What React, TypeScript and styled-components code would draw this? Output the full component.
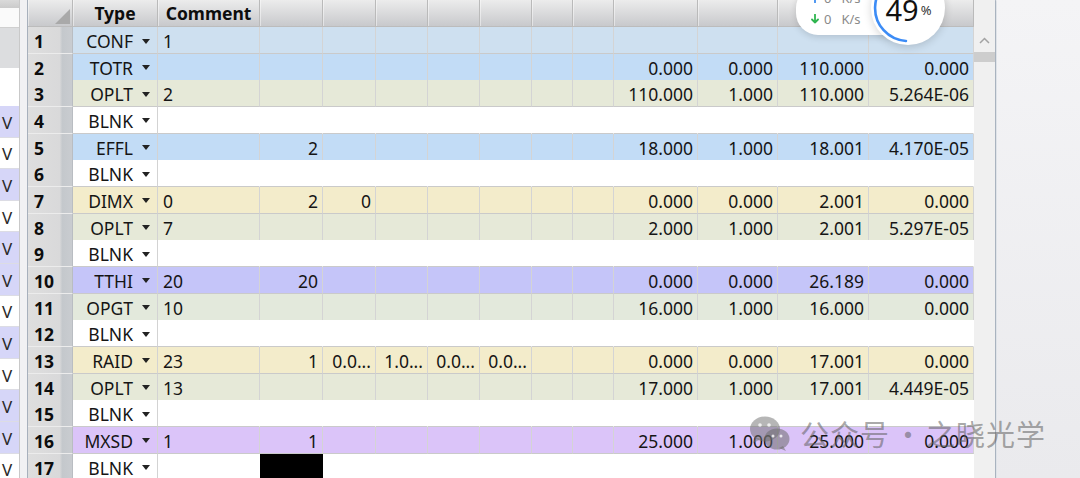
import React from 'react';
import styled, { createGlobalStyle } from 'styled-components';

const GlobalStyle = createGlobalStyle`
  html, body { margin: 0; padding: 0; width: 1080px; height: 478px; overflow: hidden; background: #efeff1; }
  #root { width: 1080px; height: 478px; }
  *, *::before, *::after { box-sizing: border-box; }
`;

const COLS = '45px 85px 102px 63px 53px 52px 52px 52px 41px 41px 84px 80px 91px 105px';
const ROW_H = '26.667px';

const Screen = styled.div`
  position: relative;
  display: flex;
  width: 1080px;
  height: 478px;
  overflow: hidden;
  font-family: "Noto Sans", "Open Sans", sans-serif;
  color: #151515;
`;

/* ---------- left strip (neighbouring window) ---------- */
const LeftStrip = styled.div`
  width: 20px;
  flex: none;
  display: flex;
  flex-direction: column;
  background: #fff;
  border-right: 1px solid #c9c9c9;
  overflow: hidden;
`;
const StripHead = styled.div`
  height: 8px;
  flex: none;
  background: linear-gradient(#dadada, #cbcbcb);
`;
const StripLight = styled.div`
  height: 20px;
  flex: none;
  background: #fafafa;
  border-bottom: 1px solid #cfcfcf;
`;
const StripGray = styled.div`
  height: 40px;
  flex: none;
  background: #dcdddf;
`;
const StripBlank = styled.div`
  height: 38px;
  flex: none;
  background: #fff;
`;
const StripRow = styled.div<{ $lav: boolean }>`
  height: 31.6px;
  flex: none;
  display: flex;
  align-items: center;
  padding: 2px 0 0 2px;
  font-size: 17px;
  color: #2a2a2a;
  background: ${p => (p.$lav ? '#d6d6f8' : '#ffffff')};
  border-bottom: 1px solid #dcdce4;
`;

const Separator = styled.div`
  width: 8px;
  flex: none;
  background: #f1f1f3;
  border-right: 1px solid #a7b0bc;
`;

/* ---------- main panel ---------- */
const Panel = styled.div`
  display: flex;
  flex: none;
  height: 478px;
`;

const Table = styled.div`
  width: 946px;
  display: flex;
  flex-direction: column;
  overflow: hidden;
`;

const HeaderRow = styled.div`
  display: grid;
  grid-template-columns: ${COLS};
  height: 27px;
  flex: none;
  background: linear-gradient(#ececec, #c8c9cc);
  border-bottom: 1px solid #bcbcbc;
`;

const HeadCell = styled.div`
  display: flex;
  align-items: center;
  justify-content: center;
  font-weight: 700;
  font-size: 17.5px;
  color: #0d0d0d;
  border-right: 1px solid #bababa;
  box-shadow: inset 1px 0 0 rgba(255, 255, 255, 0.45);
  white-space: nowrap;
`;

const Corner = styled(HeadCell)`
  justify-content: flex-end;
  align-items: flex-end;
  padding: 0 2px 2px 0;
`;

const DataRow = styled.div<{ $bg: string }>`
  display: grid;
  grid-template-columns: ${COLS};
  height: ${ROW_H};
  flex: none;
  background: ${p => p.$bg};
  font-size: 17.5px;
`;

const RowHead = styled.div`
  display: flex;
  align-items: center;
  padding: 2px 0 0 6px;
  font-weight: 700;
  color: #0d0d0d;
  background: linear-gradient(to right, #dedede 0%, #d9d9da 72%, #c4c8cc 78%, #c9ccd0 100%);
  border-bottom: 1px solid #ececec;
  border-right: 1px solid #b9bdc2;
`;

const TypeCell = styled.div<{ $bg: string }>`
  display: flex;
  align-items: center;
  justify-content: flex-end;
  gap: 9px;
  padding: 2px 7px 0 0;
  background: ${p => p.$bg};
  border-right: 1px solid #d3d3d3;
  border-bottom: 1px solid #cacaca;
  white-space: nowrap;
`;

const Caret = styled.span`
  width: 0;
  height: 0;
  border-left: 4px solid transparent;
  border-right: 4px solid transparent;
  border-top: 5px solid #222;
`;

const Cell = styled.div<{ $left?: boolean; $blank?: boolean; $fill?: string }>`
  display: flex;
  align-items: center;
  justify-content: ${p => (p.$left ? 'flex-start' : 'flex-end')};
  padding: ${p => (p.$left ? '2px 0 0 5px' : '2px 4px 0 0')};
  overflow: hidden;
  white-space: nowrap;
  background: ${p => p.$fill ?? 'transparent'};
  border-right: 1px solid ${p => (p.$blank ? 'transparent' : '#d4d4d4')};
  border-bottom: 1px solid #cacaca;
`;

const Scrollbar = styled.div`
  width: 21px;
  flex: none;
  display: flex;
  flex-direction: column;
  background: #f0f0f0;
`;
const ScrollTop = styled.div`
  height: 52px;
  flex: none;
  display: flex;
  align-items: center;
  justify-content: center;
  padding-top: 28px;
`;
const ScrollThumb = styled.div`
  height: 10px;
  flex: none;
  background: #cdcdcd;
`;
const PanelEdge = styled.div`
  width: 2px;
  flex: none;
  border-left: 1px solid #a9b3bf;
  background: #dfe3e8;
  border-top-right-radius: 4px;
`;

const RightArea = styled.div`
  flex: 1;
  background: linear-gradient(#f4f4f6, #eaeaed);
`;

/* ---------- overlays ---------- */
const NetPill = styled.div`
  position: absolute;
  left: 796px;
  top: -14px;
  width: 112px;
  height: 49px;
  border-radius: 22px;
  background: #fff;
  box-shadow: 0 2px 7px rgba(0, 0, 0, 0.14);
  display: flex;
  flex-direction: column;
  padding: 1px 0 0 15px;
  font-size: 13px;
  color: #8a8a8a;
`;
const NetLine = styled.div`
  height: 21px;
  display: flex;
  align-items: center;
`;
const NetValue = styled.span`
  margin: 0 10px 0 5px;
`;

const Gauge = styled.div`
  position: absolute;
  left: 871px;
  top: -29px;
  width: 74px;
  height: 74px;
  border-radius: 50%;
  background: #fff;
  box-shadow: 0 2px 8px rgba(0, 0, 0, 0.16);
  display: flex;
  align-items: center;
  justify-content: center;
  padding-top: 3px;
  padding-left: 1px;
`;
const GaugeArc = styled.svg`
  position: absolute;
  left: 0;
  top: 0;
`;
const GaugeValue = styled.span`
  font-size: 29px;
  line-height: 29px;
  color: #111;
`;
const GaugePct = styled.span`
  font-size: 13px;
  color: #333;
  margin-left: 2px;
`;

const Watermark = styled.div`
  position: absolute;
  left: 750px;
  top: 413px;
  height: 40px;
  display: flex;
  align-items: center;
  font-family: "Noto Sans CJK SC", "Noto Sans", sans-serif;
  font-size: 29px;
  color: rgba(95, 95, 95, 0.55);
  pointer-events: none;
`;
const WmText = styled.span`
  letter-spacing: 1px;
  white-space: nowrap;
`;
const WmDot = styled.span`
  width: 36px;
  text-align: center;
`;
const WmIcon = styled.svg`
  margin-right: 10px;
`;

/* ---------- data ---------- */
type Row = { type: string; bg: string; v: string[]; black?: number };

const BLUE1 = '#cee0f0';
const BLUE2 = '#c2dcf6';
const OLIVE = '#e6e9d8';
const YELLOW = '#f3eccb';
const LAV = '#c5c5f9';
const GREEN = '#e3e9dc';
const PURPLE = '#dbc4f9';
const WHITE = '#ffffff';

const E = '';
const rows: Row[] = [
  { type: 'CONF', bg: BLUE1, v: ['1'] },
  { type: 'TOTR', bg: BLUE2, v: [E, E, E, E, E, E, E, E, '0.000', '0.000', '110.000', '0.000'] },
  { type: 'OPLT', bg: OLIVE, v: ['2', E, E, E, E, E, E, E, '110.000', '1.000', '110.000', '5.264E-06'] },
  { type: 'BLNK', bg: WHITE, v: [] },
  { type: 'EFFL', bg: BLUE2, v: [E, '2', E, E, E, E, E, E, '18.000', '1.000', '18.001', '4.170E-05'] },
  { type: 'BLNK', bg: WHITE, v: [] },
  { type: 'DIMX', bg: YELLOW, v: ['0', '2', '0', E, E, E, E, E, '0.000', '0.000', '2.001', '0.000'] },
  { type: 'OPLT', bg: OLIVE, v: ['7', E, E, E, E, E, E, E, '2.000', '1.000', '2.001', '5.297E-05'] },
  { type: 'BLNK', bg: WHITE, v: [] },
  { type: 'TTHI', bg: LAV, v: ['20', '20', E, E, E, E, E, E, '0.000', '0.000', '26.189', '0.000'] },
  { type: 'OPGT', bg: GREEN, v: ['10', E, E, E, E, E, E, E, '16.000', '1.000', '16.000', '0.000'] },
  { type: 'BLNK', bg: WHITE, v: [] },
  { type: 'RAID', bg: YELLOW, v: ['23', '1', '0.0...', '1.0...', '0.0...', '0.0...', E, E, '0.000', '0.000', '17.001', '0.000'] },
  { type: 'OPLT', bg: OLIVE, v: ['13', E, E, E, E, E, E, E, '17.000', '1.000', '17.001', '4.449E-05'] },
  { type: 'BLNK', bg: WHITE, v: [] },
  { type: 'MXSD', bg: PURPLE, v: ['1', '1', E, E, E, E, E, E, '25.000', '1.000', '25.000', '0.000'] },
  { type: 'BLNK', bg: WHITE, v: [], black: 1 },
];

const stripPattern = [true, false, true, false, true, true, false, true, false, true, true, false];

const ArrowIcon = ({ up }: { up?: boolean }) => (
  <svg width="8" height="10" viewBox="0 0 8 10">
    {up ? (
      <path d="M4 9.5V1.5M1 4.5L4 1.5L7 4.5" stroke="#3f8ef0" strokeWidth="1.8" fill="none" strokeLinecap="round" strokeLinejoin="round" />
    ) : (
      <path d="M4 0.5V8.5M1 5.5L4 8.5L7 5.5" stroke="#2fb54f" strokeWidth="1.8" fill="none" strokeLinecap="round" strokeLinejoin="round" />
    )}
  </svg>
);

export default function App() {
  return (
    <Screen>
      <GlobalStyle />
      <LeftStrip>
        <StripHead />
        <StripLight />
        <StripGray />
        <StripBlank />
        {stripPattern.map((lav, i) => (
          <StripRow key={i} $lav={lav}>V</StripRow>
        ))}
      </LeftStrip>
      <Separator />
      <Panel>
        <Table>
          <HeaderRow>
            <Corner>
              <svg width="15" height="15" viewBox="0 0 15 15">
                <polygon points="0,15 15,15 15,0" fill="#a9a9a9" />
              </svg>
            </Corner>
            <HeadCell>Type</HeadCell>
            <HeadCell>Comment</HeadCell>
            {Array.from({ length: 11 }).map((_, i) => (
              <HeadCell key={i} />
            ))}
          </HeaderRow>
          {rows.map((r, i) => {
            const blank = r.type === 'BLNK';
            return (
              <DataRow key={i} $bg={r.bg}>
                <RowHead>{i + 1}</RowHead>
                <TypeCell $bg={r.bg}>
                  {r.type}
                  <Caret />
                </TypeCell>
                {Array.from({ length: 12 }).map((_, c) => (
                  <Cell
                    key={c}
                    $left={c === 0}
                    $blank={blank}
                    $fill={r.black === c ? '#000' : undefined}
                  >
                    {r.v[c] ?? ''}
                  </Cell>
                ))}
              </DataRow>
            );
          })}
        </Table>
        <Scrollbar>
          <ScrollTop>
            <svg width="11" height="7" viewBox="0 0 11 7">
              <polyline points="1,6 5.5,1.5 10,6" fill="none" stroke="#a3a3a3" strokeWidth="1.5" />
            </svg>
          </ScrollTop>
          <ScrollThumb />
        </Scrollbar>
        <PanelEdge />
      </Panel>
      <RightArea />

      <NetPill>
        <NetLine>
          <ArrowIcon up />
          <NetValue>0</NetValue>K/s
        </NetLine>
        <NetLine>
          <ArrowIcon />
          <NetValue>0</NetValue>K/s
        </NetLine>
      </NetPill>
      <Gauge>
        <GaugeArc width="74" height="74" viewBox="0 0 74 74">
          <path d="M37 4 A33 33 0 0 0 34.93 69.93" fill="none" stroke="#3c8cf6" strokeWidth="2.6" strokeLinecap="round" />
        </GaugeArc>
        <GaugeValue>49</GaugeValue>
        <GaugePct>%</GaugePct>
      </Gauge>

      <Watermark>
        <WmIcon width="40" height="37" viewBox="0 0 40 37">
          <ellipse cx="15" cy="14" rx="15" ry="12.5" fill="rgba(110,110,110,0.5)" />
          <path d="M5 22 L3 28 L11 24 Z" fill="rgba(110,110,110,0.5)" />
          <ellipse cx="27" cy="24" rx="12.5" ry="10.5" fill="rgba(110,110,110,0.55)" />
          <path d="M33 31 L36 36 L29 33 Z" fill="rgba(110,110,110,0.55)" />
          <circle cx="10" cy="10" r="1.8" fill="rgba(255,255,255,0.8)" />
          <circle cx="19" cy="10" r="1.8" fill="rgba(255,255,255,0.8)" />
          <circle cx="23" cy="21" r="1.5" fill="rgba(255,255,255,0.8)" />
          <circle cx="31" cy="21" r="1.5" fill="rgba(255,255,255,0.8)" />
        </WmIcon>
        <WmText>公众号</WmText>
        <WmDot>·</WmDot>
        <WmText>之晓光学</WmText>
      </Watermark>
    </Screen>
  );
}
